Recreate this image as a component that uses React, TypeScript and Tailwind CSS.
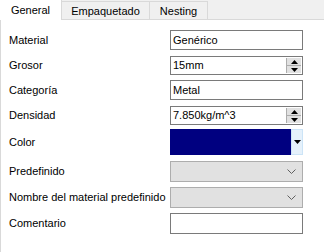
import React from "react";

function SpinButtons() {
  return (
    <div className="flex flex-col w-[15px] h-full border-l border-[#adadad]">
      <div className="flex-1 flex items-center justify-center bg-[#e1e1e1] border-b border-[#adadad]">
        <svg width="7" height="4" viewBox="0 0 7 4"><path d="M3.5 0 L7 4 L0 4 Z" fill="#000" /></svg>
      </div>
      <div className="flex-1 flex items-center justify-center bg-[#e1e1e1]">
        <svg width="7" height="4" viewBox="0 0 7 4"><path d="M0 0 L7 0 L3.5 4 Z" fill="#000" /></svg>
      </div>
    </div>
  );
}

function TextField({ value, spin, h = "h-[20px]" }: { value: string; spin?: boolean; h?: string }) {
  return (
    <div className={`w-[133px] shrink-0 ${h} border border-[#7a7a7a] bg-white flex items-stretch`}>
      <div className="flex-1 px-[2px] flex items-center text-[#000]">{value}</div>
      {spin && <div className="py-[1px] pr-[1px]"><SpinButtons /></div>}
    </div>
  );
}

function Combo() {
  return (
    <div className="w-[133px] shrink-0 h-[21px] border border-[#adadad] bg-[#e1e1e1] flex items-center justify-end pr-[6px]">
      <svg width="9" height="5" viewBox="0 0 9 5">
        <path d="M0.5 0.5 L4.5 4.5 L8.5 0.5" fill="none" stroke="#606060" strokeWidth="1" />
      </svg>
    </div>
  );
}

function Row({ label, children, mt }: { label: string; children: React.ReactNode; mt: string }) {
  return (
    <div className={`flex items-center ${mt}`}>
      <div className="w-[169px] shrink-0 pl-[8px] whitespace-nowrap">{label}</div>
      {children}
    </div>
  );
}

export default function App() {
  return (
    <div
      className="w-[324px] h-[252px] bg-white text-[11px] text-black overflow-hidden"
      style={{ fontFamily: '"Liberation Sans", Arial, sans-serif' }}
    >
      {/* tabs */}
      <div className="flex h-[20px] bg-[#f0f0f0] border-b border-[#d9d9d9]">
        <div className="w-[62px] h-[20px] bg-white flex items-center justify-center -mb-px z-10 border-r border-[#d9d9d9]">
          General
        </div>
        <div className="w-[88px] mt-[1px] border-t border-r border-[#d9d9d9] bg-[#f0f0f0] flex items-center justify-center pt-[1px]">
          Empaquetado
        </div>
        <div className="w-[58px] mt-[1px] border-t border-r border-[#d9d9d9] bg-[#f0f0f0] flex items-center justify-center pt-[1px]">
          Nesting
        </div>
      </div>

      {/* pane */}
      <div className="h-[232px] border-l border-[#d9d9d9] pt-[10px]">
        <Row label="Material" mt="">
          <TextField value="Genérico" />
        </Row>
        <Row label="Grosor" mt="mt-[6px]">
          <TextField value="15mm" spin h="h-[19px]" />
        </Row>
        <Row label="Categoría" mt="mt-[5px]">
          <TextField value="Metal" />
        </Row>
        <Row label="Densidad" mt="mt-[6px]">
          <TextField value="7.850kg/m^3" spin h="h-[19px]" />
        </Row>
        <Row label="Color" mt="mt-[4px]">
          <div className="w-[133px] shrink-0 h-[26px] flex">
            <div className="flex-1 bg-[#000080]" />
            <div className="w-[12px] bg-[#e5f1fb] border border-[#cce4f7] flex items-center justify-center">
              <svg width="7" height="4" viewBox="0 0 7 4"><path d="M0 0 L7 0 L3.5 4 Z" fill="#000" /></svg>
            </div>
          </div>
        </Row>
        <Row label="Predefinido" mt="mt-[6px]">
          <Combo />
        </Row>
        <Row label="Nombre del material predefinido" mt="mt-[5px]">
          <Combo />
        </Row>
        <Row label="Comentario" mt="mt-[5px]">
          <TextField value="" h="h-[21px]" />
        </Row>
      </div>
    </div>
  );
}
